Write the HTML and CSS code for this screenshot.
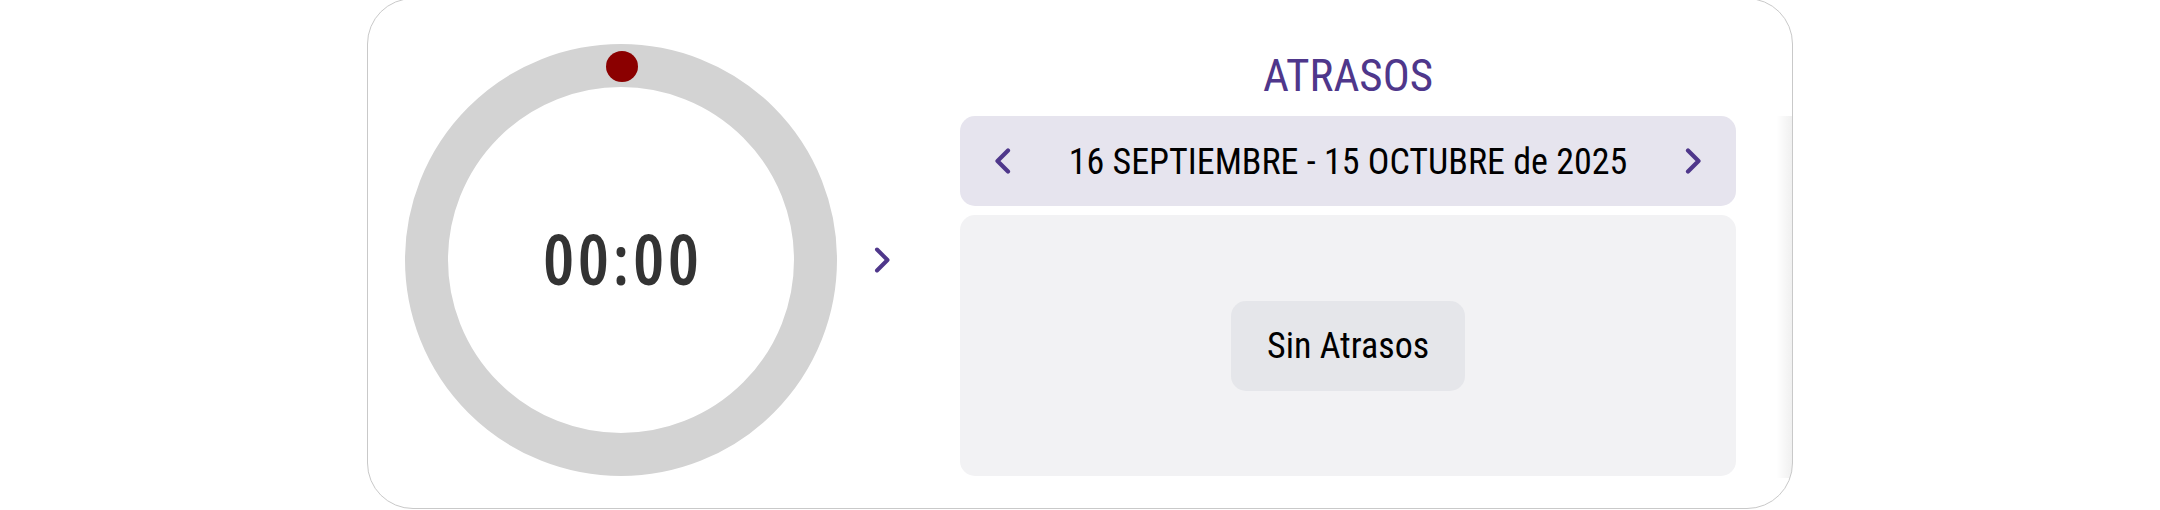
FILE: index.html
```html
<!DOCTYPE html>
<html lang="es">
<head>
<meta charset="utf-8">
<title>Atrasos</title>
<link rel="stylesheet" href="styles.css">
</head>
<body>
<div class="page">
  <div class="card">
    <div class="timer">
      <div class="ring">
        <span class="dot"></span>
        <div class="time">00:00</div>
      </div>
    </div>
    <button class="next-arrow" aria-label="Siguiente">
      <svg viewBox="0 0 16 26" width="16" height="26"><path d="M3 2.5 L13.5 13 L3 23.5" fill="none" stroke="currentColor" stroke-width="4" stroke-linecap="round" stroke-linejoin="round"/></svg>
    </button>
    <div class="atrasos">
      <div class="title">ATRASOS</div>
      <div class="range">
        <button class="nav" aria-label="Anterior">
          <svg viewBox="0 0 16 26" width="16" height="26"><path d="M13 2.5 L2.5 13 L13 23.5" fill="none" stroke="currentColor" stroke-width="4.2" stroke-linecap="round" stroke-linejoin="round"/></svg>
        </button>
        <div class="range-text">16 SEPTIEMBRE - 15 OCTUBRE de 2025</div>
        <button class="nav" aria-label="Siguiente">
          <svg viewBox="0 0 16 26" width="16" height="26"><path d="M3 2.5 L13.5 13 L3 23.5" fill="none" stroke="currentColor" stroke-width="4.2" stroke-linecap="round" stroke-linejoin="round"/></svg>
        </button>
      </div>
      <div class="panel">
        <div class="empty">Sin Atrasos</div>
      </div>
    </div>
    <div class="edge-shadow"></div>
  </div>
</div>
</body>
</html>
```
FILE: styles.css
```css
* { box-sizing: border-box; }
html, body { margin: 0; padding: 0; background: #ffffff; }
body { width: 2160px; height: 510px; overflow: hidden; font-family: "Roboto Condensed", Roboto, sans-serif; }

.page {
  display: flex;
  justify-content: center;
  margin-top: -2px;
}

.card {
  position: relative;
  width: 1426px;
  height: 511px;
  border: 1px solid #c9c9c9;
  border-radius: 46px;
  background: #fff;
  display: flex;
  align-items: flex-start;
  padding-left: 37px;
  overflow: hidden;
}

.timer { margin-top: 45px; }

.ring {
  position: relative;
  width: 432px;
  height: 432px;
  border-radius: 50%;
  border: 43px solid #d3d3d3;
  display: flex;
  align-items: center;
  justify-content: center;
}

.dot {
  position: absolute;
  top: -36px;
  left: 50%;
  width: 32px;
  height: 31px;
  margin-left: -15px;
  border-radius: 50%;
  background: #8b0000;
}

.time {
  font-family: "Open Sans", sans-serif;
  font-stretch: 75%;
  font-weight: 600;
  font-size: 70px;
  line-height: 1;
  letter-spacing: 3.5px;
  padding-left: 3.5px;
  color: #333333;
  margin-top: -4px;
}

.next-arrow {
  margin: 248px 0 0 37px;
  padding: 0;
  border: 0;
  background: none;
  color: #4f378b;
  width: 16px;
  height: 26px;
  display: flex;
}

.atrasos {
  margin: 54px 0 0 70px;
  width: 776px;
  display: flex;
  flex-direction: column;
}

.title {
  font-size: 45px;
  line-height: 46px;
  text-align: center;
  color: #4f378b;
  margin-bottom: 17px;
}

.range {
  height: 90px;
  border-radius: 15px;
  background: #e6e4ee;
  display: flex;
  align-items: center;
  justify-content: space-between;
  padding: 0 35px;
}

.nav {
  padding: 0;
  border: 0;
  background: none;
  color: #4f378b;
  width: 16px;
  height: 26px;
  display: flex;
}

.range-text {
  font-size: 36px;
  color: #000;
  line-height: 1;
  margin-top: 2px;
}

.panel {
  margin-top: 9px;
  height: 261px;
  border-radius: 15px;
  background: #f2f2f4;
  display: flex;
  align-items: center;
  padding-left: 271px;
}

.empty {
  height: 90px;
  border-radius: 15px;
  background: #e5e6ea;
  padding: 0 36px;
  display: flex;
  align-items: center;
  font-size: 36px;
  color: #000;
}

.edge-shadow {
  position: absolute;
  right: 0;
  top: 117px;
  bottom: 30px;
  width: 16px;
  background: linear-gradient(to right, rgba(0,0,0,0), rgba(0,0,0,0.06));
}
```
